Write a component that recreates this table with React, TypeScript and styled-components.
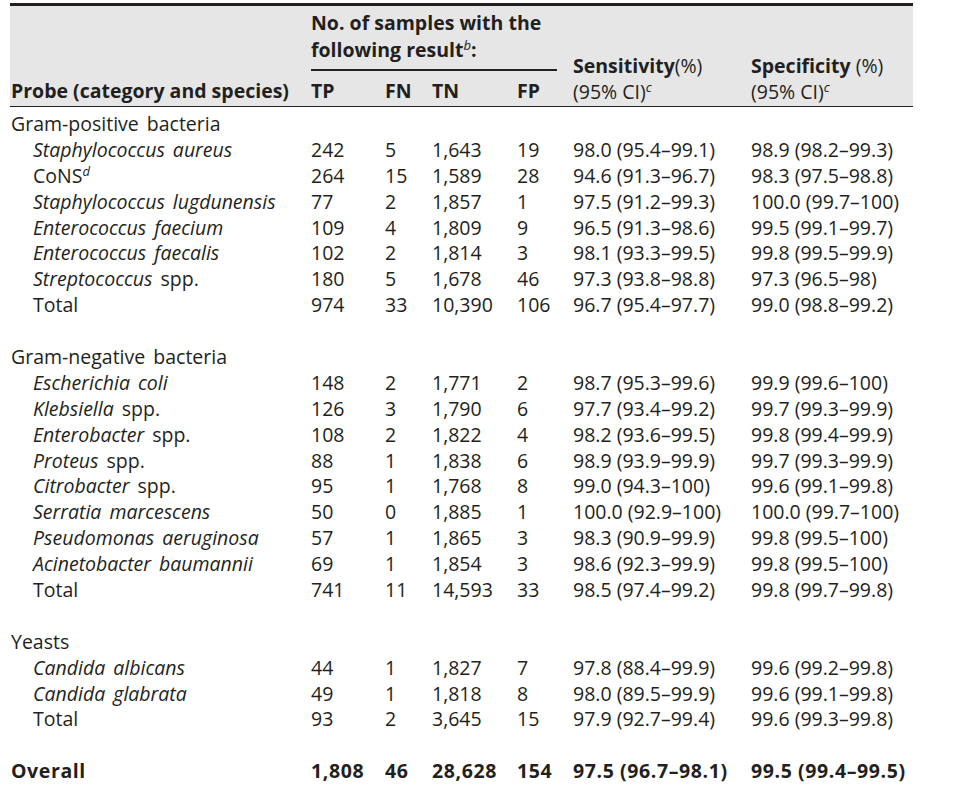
import React from "react";
import styled, { createGlobalStyle } from "styled-components";

const GlobalStyle = createGlobalStyle`
  html, body {
    margin: 0;
    padding: 0;
    background: #ffffff;
  }
  body {
    font-family: "Open Sans", "Noto Sans", "Liberation Sans", sans-serif;
    color: #231f20;
  }
`;

const COLS = "301px 74px 47px 85px 56px 178px 162px";
const LINE = "25.9px";

const Page = styled.div`
  padding: 3px 0 0 10px;
  width: 903px;
  font-size: 19.5px;
`;

const Header = styled.div`
  display: grid;
  grid-template-columns: ${COLS};
  grid-template-rows: auto auto;
  background: #e6e6e6;
  border-top: 3px solid #231f20;
  border-bottom: 1px solid #231f20;
  font-weight: 700;
  line-height: 26.5px;
`;

const GroupHead = styled.div`
  grid-column: 2 / 6;
  grid-row: 1;
  padding-top: 4px;
  padding-bottom: 6px;
  margin-right: 16px;
  border-bottom: 2.5px solid #231f20;
`;

const ColHead = styled.div<{ $col: number; $pad?: number }>`
  grid-column: ${(p) => p.$col};
  grid-row: 2;
  align-self: end;
  padding: 7px 0 2px ${(p) => p.$pad ?? 0}px;
  line-height: 26px;
  white-space: nowrap;
`;

const StatHead = styled.div<{ $col: number }>`
  grid-column: ${(p) => p.$col};
  grid-row: 1 / 3;
  align-self: end;
  padding-bottom: 1px;
  line-height: 26px;
  white-space: nowrap;
`;

const Light = styled.span`
  font-weight: 400;
`;

const Sup = styled.sup`
  font-style: italic;
  font-weight: 400;
  font-size: 13px;
  line-height: 0;
  vertical-align: 0.55em;
`;

const Body = styled.div`
  padding-top: 4px;
  line-height: ${LINE};
`;

const Row = styled.div<{ $bold?: boolean }>`
  display: grid;
  grid-template-columns: ${COLS};
  height: ${LINE};
  font-weight: ${(p) => (p.$bold ? 700 : 400)};
  letter-spacing: ${(p) => (p.$bold ? "0.6px" : "0")};
  white-space: nowrap;
`;

const Label = styled.div<{ $indent?: boolean }>`
  padding-left: ${(p) => (p.$indent ? 23 : 1)}px;
  word-spacing: 3px;
`;

const Cell = styled.div``;

const Spacer = styled.div`
  height: ${LINE};
`;

type Item = {
  it?: string;
  rest?: string;
  sup?: string;
  v: [string, string, string, string, string, string];
};

type Section = { title: string; items: Item[]; total: Item["v"] };

const sections: Section[] = [
  {
    title: "Gram-positive bacteria",
    items: [
      { it: "Staphylococcus aureus", v: ["242", "5", "1,643", "19", "98.0 (95.4–99.1)", "98.9 (98.2–99.3)"] },
      { rest: "CoNS", sup: "d", v: ["264", "15", "1,589", "28", "94.6 (91.3–96.7)", "98.3 (97.5–98.8)"] },
      { it: "Staphylococcus lugdunensis", v: ["77", "2", "1,857", "1", "97.5 (91.2–99.3)", "100.0 (99.7–100)"] },
      { it: "Enterococcus faecium", v: ["109", "4", "1,809", "9", "96.5 (91.3–98.6)", "99.5 (99.1–99.7)"] },
      { it: "Enterococcus faecalis", v: ["102", "2", "1,814", "3", "98.1 (93.3–99.5)", "99.8 (99.5–99.9)"] },
      { it: "Streptococcus", rest: " spp.", v: ["180", "5", "1,678", "46", "97.3 (93.8–98.8)", "97.3 (96.5–98)"] },
    ],
    total: ["974", "33", "10,390", "106", "96.7 (95.4–97.7)", "99.0 (98.8–99.2)"],
  },
  {
    title: "Gram-negative bacteria",
    items: [
      { it: "Escherichia coli", v: ["148", "2", "1,771", "2", "98.7 (95.3–99.6)", "99.9 (99.6–100)"] },
      { it: "Klebsiella", rest: " spp.", v: ["126", "3", "1,790", "6", "97.7 (93.4–99.2)", "99.7 (99.3–99.9)"] },
      { it: "Enterobacter", rest: " spp.", v: ["108", "2", "1,822", "4", "98.2 (93.6–99.5)", "99.8 (99.4–99.9)"] },
      { it: "Proteus", rest: " spp.", v: ["88", "1", "1,838", "6", "98.9 (93.9–99.9)", "99.7 (99.3–99.9)"] },
      { it: "Citrobacter", rest: " spp.", v: ["95", "1", "1,768", "8", "99.0 (94.3–100)", "99.6 (99.1–99.8)"] },
      { it: "Serratia marcescens", v: ["50", "0", "1,885", "1", "100.0 (92.9–100)", "100.0 (99.7–100)"] },
      { it: "Pseudomonas aeruginosa", v: ["57", "1", "1,865", "3", "98.3 (90.9–99.9)", "99.8 (99.5–100)"] },
      { it: "Acinetobacter baumannii", v: ["69", "1", "1,854", "3", "98.6 (92.3–99.9)", "99.8 (99.5–100)"] },
    ],
    total: ["741", "11", "14,593", "33", "98.5 (97.4–99.2)", "99.8 (99.7–99.8)"],
  },
  {
    title: "Yeasts",
    items: [
      { it: "Candida albicans", v: ["44", "1", "1,827", "7", "97.8 (88.4–99.9)", "99.6 (99.2–99.8)"] },
      { it: "Candida glabrata", v: ["49", "1", "1,818", "8", "98.0 (89.5–99.9)", "99.6 (99.1–99.8)"] },
    ],
    total: ["93", "2", "3,645", "15", "97.9 (92.7–99.4)", "99.6 (99.3–99.8)"],
  },
];

const overall: Item["v"] = ["1,808", "46", "28,628", "154", "97.5 (96.7–98.1)", "99.5 (99.4–99.5)"];

const Values: React.FC<{ v: Item["v"] }> = ({ v }) => (
  <>
    {v.map((x, i) => (
      <Cell key={i}>{x}</Cell>
    ))}
  </>
);

export default function App() {
  return (
    <>
      <GlobalStyle />
      <Page>
        <Header>
          <GroupHead>
            No. of samples with the
            <br />
            following result<Sup>b</Sup>:
          </GroupHead>
          <ColHead $col={1} $pad={1}>Probe (category and species)</ColHead>
          <ColHead $col={2}>TP</ColHead>
          <ColHead $col={3}>FN</ColHead>
          <ColHead $col={4}>TN</ColHead>
          <ColHead $col={5}>FP</ColHead>
          <StatHead $col={6}>
            Sensitivity<Light>(%)</Light>
            <br />
            <Light>(95% CI)</Light>
            <Sup>c</Sup>
          </StatHead>
          <StatHead $col={7}>
            Specificity <Light>(%)</Light>
            <br />
            <Light>(95% CI)</Light>
            <Sup>c</Sup>
          </StatHead>
        </Header>
        <Body>
          {sections.map((s) => (
            <React.Fragment key={s.title}>
              <Row>
                <Label>{s.title}</Label>
              </Row>
              {s.items.map((item, i) => (
                <Row key={i}>
                  <Label $indent>
                    {item.it && <i>{item.it}</i>}
                    {item.rest}
                    {item.sup && <Sup>{item.sup}</Sup>}
                  </Label>
                  <Values v={item.v} />
                </Row>
              ))}
              <Row>
                <Label $indent>Total</Label>
                <Values v={s.total} />
              </Row>
              <Spacer />
            </React.Fragment>
          ))}
          <Row $bold>
            <Label>Overall</Label>
            <Values v={overall} />
          </Row>
        </Body>
      </Page>
    </>
  );
}
